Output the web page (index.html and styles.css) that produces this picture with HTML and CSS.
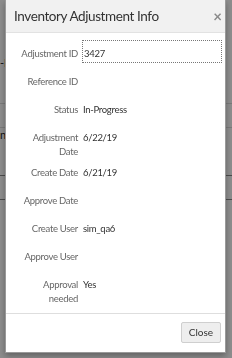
FILE: index.html
```html
<!DOCTYPE html>
<html lang="en">
<head>
    <meta charset="UTF-8">
    <meta name="viewport" content="width=device-width, initial-scale=1.0">
    <title>Inventory Adjustment Info</title>
    <link rel="stylesheet" href="styles.css">
</head>
<body>
    <div class="page">
        <div class="page-row">-P</div>
        <div class="page-line"></div>
        <div class="page-line"></div>
        <div class="page-row">n</div>
        <div class="page-line dark"></div>
        <div class="page-line dark"></div>
    </div>

    <div class="overlay"></div>

    <div class="modal">
        <div class="modal-header">
            <h1 class="modal-title">Inventory Adjustment Info</h1>
            <span class="modal-close">&times;</span>
        </div>

        <div class="modal-body">
            <div class="info-row">
                <div class="info-label">Adjustment ID</div>
                <div class="info-value focused">3427</div>
            </div>
            <div class="info-row">
                <div class="info-label">Reference ID</div>
                <div class="info-value"></div>
            </div>
            <div class="info-row">
                <div class="info-label">Status</div>
                <div class="info-value">In-Progress</div>
            </div>
            <div class="info-row">
                <div class="info-label">Adjustment<br>Date</div>
                <div class="info-value">6/22/19</div>
            </div>
            <div class="info-row">
                <div class="info-label">Create Date</div>
                <div class="info-value">6/21/19</div>
            </div>
            <div class="info-row">
                <div class="info-label">Approve Date</div>
                <div class="info-value"></div>
            </div>
            <div class="info-row">
                <div class="info-label">Create User</div>
                <div class="info-value">sim_qa6</div>
            </div>
            <div class="info-row">
                <div class="info-label">Approve User</div>
                <div class="info-value"></div>
            </div>
            <div class="info-row">
                <div class="info-label">Approval<br>needed</div>
                <div class="info-value">Yes</div>
            </div>
        </div>

        <div class="modal-footer">
            <button class="btn">Close</button>
        </div>
    </div>
</body>
</html>
```

FILE: styles.css
```css
* {
    box-sizing: border-box;
    margin: 0;
    padding: 0;
}

body {
    font-family: Lato, "Open Sans", sans-serif;
    background-color: #ffffff;
    color: #333333;
    height: 358px;
    overflow: hidden;
}

/* page behind the dialog */
.page {
    padding-top: 56px;
}

.page-row {
    font-size: 11px;
    line-height: 14px;
    color: #222222;
    height: 24px;
}

.page-line {
    height: 24px;
    border-bottom: 1px solid #dddddd;
}

.page-line.dark {
    border-bottom-color: #888888;
}

.overlay {
    position: fixed;
    inset: 0;
    background-color: rgba(0, 0, 0, 0.45);
}

.modal {
    position: fixed;
    top: 0;
    left: 5px;
    width: 221px;
    height: 353px;
    display: flex;
    flex-direction: column;
    background-color: #ffffff;
    border: 1px solid #9a9a9a;
    border-top: none;
    box-shadow: 0 3px 6px rgba(0, 0, 0, 0.3);
}

.modal-header {
    height: 33px;
    display: flex;
    align-items: center;
    justify-content: space-between;
    padding: 0 3px 0 8px;
    background-color: #f1f1f1;
    border-bottom: 1px solid #e2e2e2;
}

.modal-title {
    font-size: 13.5px;
    font-weight: 400;
    letter-spacing: -0.4px;
    color: #333333;
}

.modal-close {
    font-size: 15px;
    line-height: 1;
    color: #8a8a8a;
    font-weight: 700;
}

.modal-body {
    flex: 1;
    padding: 10px 3px 0 0;
    border-bottom: 1px solid #dedede;
}

.info-row {
    display: grid;
    grid-template-columns: 72px 1fr;
    column-gap: 4px;
    min-height: 25px;
    margin-bottom: 3px;
    font-size: 9.5px;
    letter-spacing: -0.3px;
    line-height: 14px;
}

.info-label {
    padding-top: 4px;
    text-align: right;
    color: #666666;
}

.info-value {
    padding-top: 4px;
    padding-left: 1px;
    color: #333333;
}

.info-value.focused {
    height: 23px;
    margin-top: -3px;
    padding-top: 6px;
    border: 1px dotted #777777;
}

.modal-footer {
    height: 38px;
    display: flex;
    align-items: center;
    justify-content: flex-end;
    padding: 0 4px 2px 0;
    background-color: #ffffff;
}

.btn {
    font-family: inherit;
    font-size: 10px;
    color: #333333;
    background-color: #eeeeee;
    border: 1px solid #cfcfcf;
    border-radius: 2px;
    width: 40px;
    height: 21px;
    cursor: pointer;
}
```
